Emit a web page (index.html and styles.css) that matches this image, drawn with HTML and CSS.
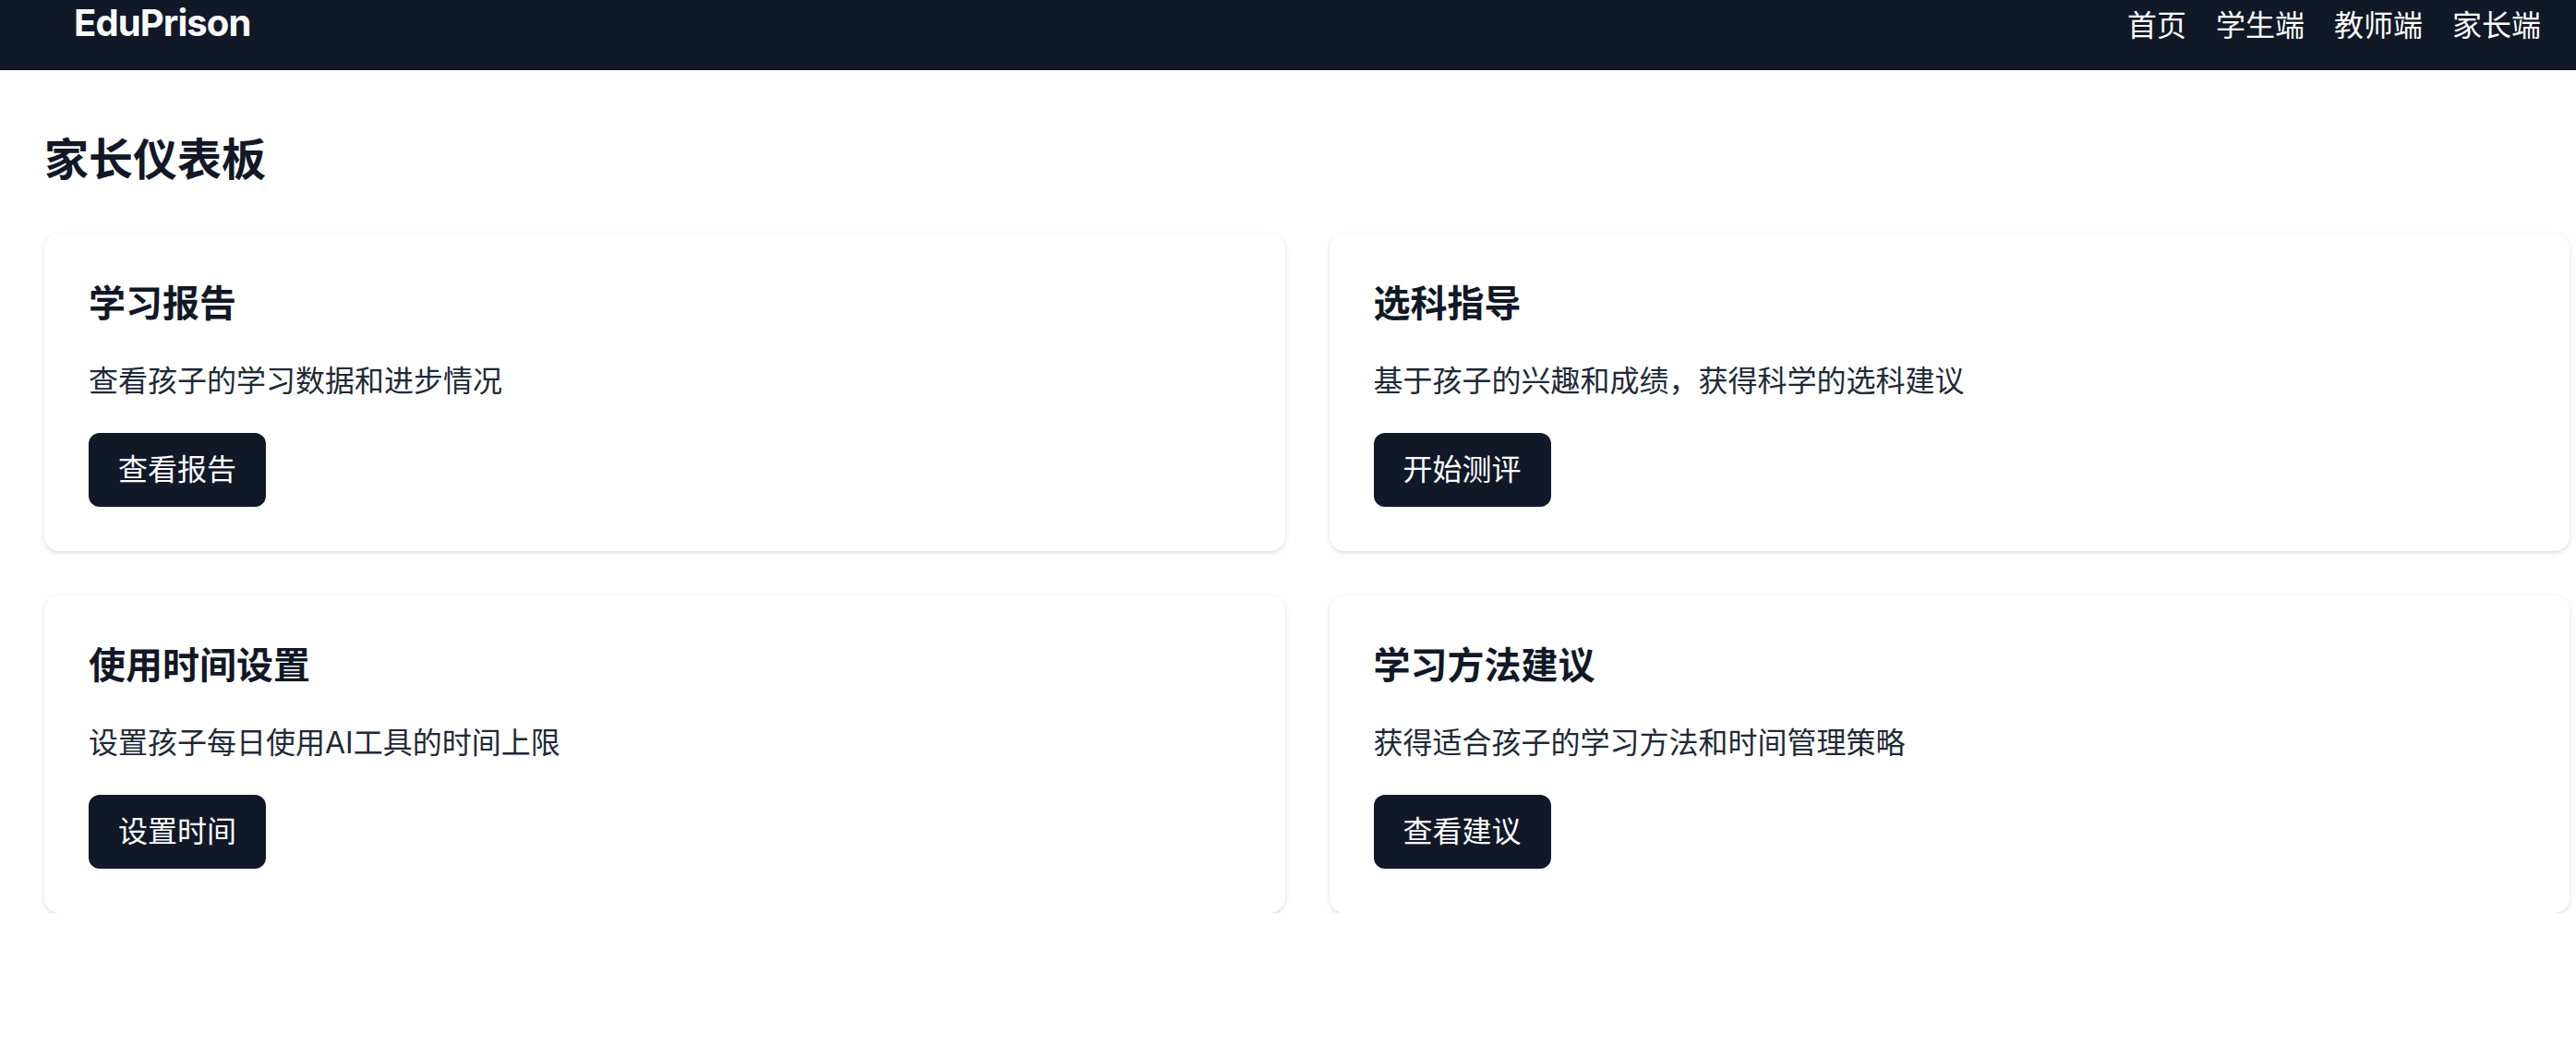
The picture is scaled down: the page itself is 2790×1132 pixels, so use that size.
FILE: index.html
```html
<!DOCTYPE html>
<html lang="zh-CN">
<head>
<meta charset="utf-8">
<title>EduPrison - 家长仪表板</title>
<link rel="stylesheet" href="styles.css">
</head>
<body>
<nav class="nav">
  <div class="nav-row">
    <a class="logo" href="#">EduPrison</a>
    <div class="nav-links">
      <a href="#">首页</a>
      <a href="#">学生端</a>
      <a href="#">教师端</a>
      <a href="#">家长端</a>
    </div>
  </div>
</nav>
<main class="main">
  <h1 class="page-title">家长仪表板</h1>
  <div class="grid">
    <section class="card">
      <h2 class="card-title">学习报告</h2>
      <p class="card-desc">查看孩子的学习数据和进步情况</p>
      <button class="btn">查看报告</button>
    </section>
    <section class="card">
      <h2 class="card-title">选科指导</h2>
      <p class="card-desc">基于孩子的兴趣和成绩，获得科学的选科建议</p>
      <button class="btn">开始测评</button>
    </section>
    <section class="card">
      <h2 class="card-title">使用时间设置</h2>
      <p class="card-desc">设置孩子每日使用AI工具的时间上限</p>
      <button class="btn">设置时间</button>
    </section>
    <section class="card">
      <h2 class="card-title">学习方法建议</h2>
      <p class="card-desc">获得适合孩子的学习方法和时间管理策略</p>
      <button class="btn">查看建议</button>
    </section>
  </div>
</main>
</body>
</html>
```

FILE: styles.css
```css
* { box-sizing: border-box; }
html, body { margin: 0; padding: 0; }
body {
  background: #ffffff;
  font-family: Inter, "Noto Sans CJK SC", sans-serif;
  color: #111827;
}
a { text-decoration: none; color: inherit; }

.nav {
  background: #111827;
  height: 76px;
}
.nav-row {
  height: 50px;
  display: flex;
  align-items: center;
  justify-content: space-between;
  padding: 0 38px 0 80px;
}
.logo {
  font-family: Inter, sans-serif;
  font-weight: 700;
  font-size: 40px;
  line-height: 50px;
  letter-spacing: -0.9px;
  color: #f9fafb;
}
.nav-links {
  display: flex;
  gap: 32px;
}
.nav-links a {
  font-family: "Noto Sans CJK SC", sans-serif;
  font-size: 32px;
  line-height: 50px;
  color: #ffffff;
}

.main {
  padding: 65px 7px 0 48px;
}
.page-title {
  margin: 0 0 48px 0;
  font-size: 48px;
  line-height: 64px;
  font-weight: 700;
  color: #111827;
}
.grid {
  display: grid;
  grid-template-columns: 1fr 1fr;
  gap: 48px;
}
.card {
  background: #ffffff;
  border-radius: 16px;
  padding: 48px;
  box-shadow: 0 2px 6px 0 rgba(0,0,0,0.1), 0 2px 4px -2px rgba(0,0,0,0.1);
}
.card-title {
  margin: 0 0 32px 0;
  font-size: 40px;
  line-height: 56px;
  font-weight: 700;
  color: #111827;
}
.card-desc {
  margin: 0 0 32px 0;
  font-size: 32px;
  line-height: 48px;
  color: #1f2937;
}
.btn {
  display: inline-block;
  background: #111827;
  color: #ffffff;
  border: none;
  border-radius: 12px;
  padding: 16px 32px;
  font-family: Inter, "Noto Sans CJK SC", sans-serif;
  font-size: 32px;
  line-height: 48px;
  cursor: pointer;
}
```
